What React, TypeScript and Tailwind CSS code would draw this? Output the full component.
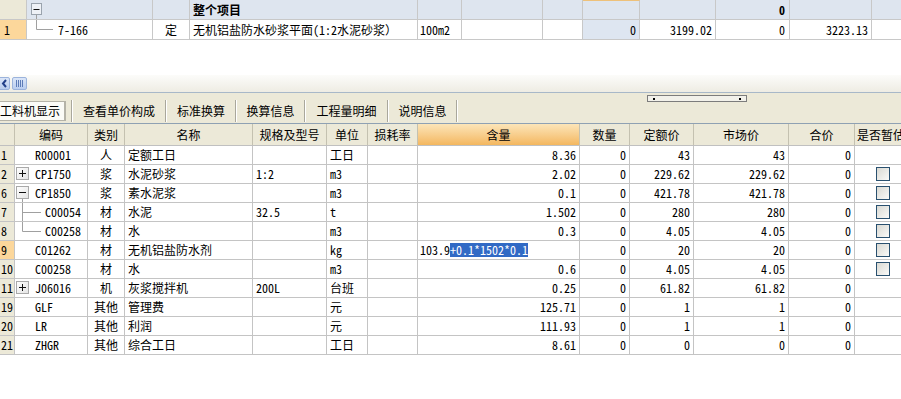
import React from 'react';

const F = "font-['Noto_Sans_Mono_CJK_SC','Noto_Sans_CJK_SC',monospace]";
const LINE = '#a0a0a0';

function Box({ minus, below }: { minus?: boolean; below?: boolean }) {
  return (
    <svg width="20" height="18" viewBox="0 0 20 18" className="shrink-0">
      {below && <line x1="7.5" y1="14" x2="7.5" y2="19" stroke={LINE} />}
      <defs>
        <linearGradient id="bx" x1="0" y1="0" x2="1" y2="1">
          <stop offset="0" stopColor="#ffffff" />
          <stop offset="1" stopColor="#e4e4e4" />
        </linearGradient>
      </defs>
      <rect x="1.5" y="2.5" width="12" height="12" fill="url(#bx)" stroke="#a9a9a9" />
      <line x1="4" y1="8.5" x2="11" y2="8.5" stroke="#111" />
      {!minus && <line x1="7.5" y1="5" x2="7.5" y2="12" stroke="#111" />}
    </svg>
  );
}

function Branch({ last }: { last?: boolean }) {
  return (
    <svg width="30" height="18" viewBox="0 0 30 18" className="shrink-0">
      <line x1="7.5" y1="-1" x2="7.5" y2={last ? 9.5 : 19} stroke={LINE} />
      <line x1="7.5" y1="9.5" x2="26" y2="9.5" stroke={LINE} />
    </svg>
  );
}

function CheckBox() {
  return (
    <div className="ml-[21px] w-[14px] h-[14px] border border-[#29506f] bg-gradient-to-br from-[#d9d9d3] to-[#fafaf8]" />
  );
}

type Row = {
  n: string;
  code: string;
  tree?: 'plus' | 'minus' | 'tee' | 'elbow';
  type: string;
  name: string;
  spec?: string;
  unit: string;
  qty: string;
  p1: string;
  p2: string;
  cb?: boolean;
  active?: boolean;
};

const rows: Row[] = [
  { n: '1', code: 'R00001', type: '人', name: '定额工日', unit: '工日', qty: '8.36', p1: '43', p2: '43' },
  { n: '2', code: 'CP1750', tree: 'plus', type: '浆', name: '水泥砂浆', spec: '1:2', unit: 'm3', qty: '2.02', p1: '229.62', p2: '229.62', cb: true },
  { n: '6', code: 'CP1850', tree: 'minus', type: '浆', name: '素水泥浆', unit: 'm3', qty: '0.1', p1: '421.78', p2: '421.78', cb: true },
  { n: '7', code: 'C00054', tree: 'tee', type: '材', name: '水泥', spec: '32.5', unit: 't', qty: '1.502', p1: '280', p2: '280', cb: true },
  { n: '8', code: 'C00258', tree: 'elbow', type: '材', name: '水', unit: 'm3', qty: '0.3', p1: '4.05', p2: '4.05', cb: true },
  { n: '9', code: 'C01262', type: '材', name: '无机铝盐防水剂', unit: 'kg', qty: '', p1: '20', p2: '20', cb: true, active: true },
  { n: '10', code: 'C00258', type: '材', name: '水', unit: 'm3', qty: '0.6', p1: '4.05', p2: '4.05', cb: true },
  { n: '11', code: 'J06016', tree: 'plus', type: '机', name: '灰浆搅拌机', spec: '200L', unit: '台班', qty: '0.25', p1: '61.82', p2: '61.82' },
  { n: '19', code: 'GLF', type: '其他', name: '管理费', unit: '元', qty: '125.71', p1: '1', p2: '1' },
  { n: '20', code: 'LR', type: '其他', name: '利润', unit: '元', qty: '111.93', p1: '1', p2: '1' },
  { n: '21', code: 'ZHGR', type: '其他', name: '综合工日', unit: '工日', qty: '8.61', p1: '0', p2: '0' },
];

const cell = 'shrink-0 h-full flex items-center border-r border-[#c4c4c4] overflow-hidden whitespace-nowrap';
const hcell = 'shrink-0 h-full flex items-center justify-center border-r border-[#c4c1b0] whitespace-nowrap';

function TopGrid() {
  const tc = 'shrink-0 h-full flex items-center border-r border-[#c8c8c8] overflow-hidden whitespace-nowrap';
  return (
    <div>
      <div className="flex h-[20px] border-b border-[#c8c8c8] bg-[#dee5ef]">
        <div className={`${tc} w-[27px] bg-[#ece9d8]`} />
        <div className={`${tc} w-[126px] items-start`}>
          <svg width="30" height="19" viewBox="0 0 30 19" className="shrink-0">
            <rect x="4.5" y="3.5" width="10" height="11" fill="#eef1f6" stroke="#9aa3ad" />
            <line x1="6.5" y1="9.5" x2="12.5" y2="9.5" stroke="#111" />
            <line x1="9.5" y1="14.5" x2="9.5" y2="20" stroke={LINE} />
          </svg>
        </div>
        <div className={`${tc} w-[37px]`} />
        <div className={`${tc} w-[228px] pl-[3px] font-bold`}>整个项目</div>
        <div className={`${tc} w-[44px]`} />
        <div className={`${tc} w-[81px]`} />
        <div className={`${tc} w-[40px]`} />
        <div className={`${tc} w-[57px] border-t border-t-[#eec17a]`} />
        <div className={`${tc} w-[76px]`} />
        <div className={`${tc} w-[74px] justify-end pr-[4px] font-bold`}>0</div>
        <div className={`${tc} w-[82px]`} />
        <div className={`${tc} w-[40px]`} />
      </div>
      <div className="flex h-[20px] border-b border-[#c8c8c8] bg-white">
        <div className={`${tc} w-[27px] bg-[#fcd79b] pl-[4px]`}>1</div>
        <div className={`${tc} w-[126px]`}>
          <svg width="31" height="19" viewBox="0 0 31 19" className="shrink-0">
            <line x1="9.5" y1="-1" x2="9.5" y2="9.5" stroke={LINE} />
            <line x1="9.5" y1="9.5" x2="26" y2="9.5" stroke={LINE} />
          </svg>
          <span>7-166</span>
        </div>
        <div className={`${tc} w-[37px] justify-center`}>定</div>
        <div className={`${tc} w-[228px] pl-[3px]`}>无机铝盐防水砂浆平面(1:2水泥砂浆）</div>
        <div className={`${tc} w-[44px] pl-[2px]`}>100m2</div>
        <div className={`${tc} w-[81px]`} />
        <div className={`${tc} w-[40px]`} />
        <div className={`${tc} w-[57px] justify-end pr-[3px] bg-[#dee6f1]`}>0</div>
        <div className={`${tc} w-[76px] justify-end pr-[3px]`}>3199.02</div>
        <div className={`${tc} w-[74px] justify-end pr-[4px]`}>0</div>
        <div className={`${tc} w-[82px] justify-end pr-[3px]`}>3223.13</div>
        <div className={`${tc} w-[40px]`} />
      </div>
    </div>
  );
}

function Toolbar() {
  return (
    <div className="h-[17px] bg-gradient-to-b from-[#fcfcfa] to-[#eeece3] flex items-start pt-[2px] gap-[2px]">
      <div className="ml-[-2px] w-[12px] h-[13px] rounded-[2px] border border-[#9bb3dc] bg-gradient-to-b from-[#dbe6f8] to-[#b9cdef] flex items-center justify-center">
        <svg width="7" height="9" viewBox="0 0 7 9">
          <path d="M5 1 L2 4.5 L5 8" stroke="#22408a" strokeWidth="2" fill="none" />
        </svg>
      </div>
      <div className="w-[15px] h-[13px] rounded-[2px] border border-[#9bb3dc] bg-gradient-to-b from-[#dbe6f8] to-[#b9cdef] flex items-center justify-center">
        <svg width="9" height="7" viewBox="0 0 9 7">
          <line x1="1.5" y1="0" x2="1.5" y2="7" stroke="#5d7cb8" />
          <line x1="3.5" y1="0" x2="3.5" y2="7" stroke="#5d7cb8" />
          <line x1="5.5" y1="0" x2="5.5" y2="7" stroke="#5d7cb8" />
          <line x1="7.5" y1="0" x2="7.5" y2="7" stroke="#5d7cb8" />
        </svg>
      </div>
    </div>
  );
}

const tabs = [
  { t: '查看单价构成', w: 'w-[92px]' },
  { t: '标准换算', w: 'w-[68px]' },
  { t: '换算信息', w: 'w-[67px]' },
  { t: '工程量明细', w: 'w-[81px]' },
  { t: '说明信息', w: 'w-[67px]' },
];

function Sep() {
  return <div className="shrink-0 w-[2px] h-[22px] border-l border-[#a9a79c] border-r border-r-white" />;
}

function TabBar() {
  return (
    <div className="relative h-[31px] bg-[#ece9d8] border-t border-[#a8b8c8] flex items-end pb-[1px]">
      <div className="absolute left-[647px] top-[2px] w-[100px] h-[7px] border border-[#7c7c7c] bg-[#f2f1ea] flex items-center justify-between px-[5px]">
        <div className="w-[2px] h-[2px] bg-black" />
        <div className="w-[2px] h-[2px] bg-black" />
      </div>
      <div className="w-[71px] h-[22px] flex items-center">
        <div className="w-[66px] h-[20px] bg-[#fbfbf7] border-t border-b border-r-2 border-[#b5b3a8] flex items-center pl-[0px]">
          工料机显示
        </div>
      </div>
      <Sep />
      {tabs.map((tb) => (
        <React.Fragment key={tb.t}>
          <div className={`${tb.w} h-[22px] flex items-center justify-center`}>{tb.t}</div>
          <Sep />
        </React.Fragment>
      ))}
    </div>
  );
}

function Header() {
  return (
    <div className="flex h-[23px] border-t border-[#8fa1b3] border-b border-b-[#c0c0c0] bg-[#ece9d8]">
      <div className={`${hcell} w-[15px]`} />
      <div className={`${hcell} w-[73px]`}>编码</div>
      <div className={`${hcell} w-[37px]`}>类别</div>
      <div className={`${hcell} w-[128px]`}>名称</div>
      <div className={`${hcell} w-[74px]`}>规格及型号</div>
      <div className={`${hcell} w-[41px]`}>单位</div>
      <div className={`${hcell} w-[50px]`}>损耗率</div>
      <div className={`${hcell} w-[162px] bg-gradient-to-b from-[#fce5b8] to-[#f3b75e]`}>含量</div>
      <div className={`${hcell} w-[50px]`}>数量</div>
      <div className={`${hcell} w-[64px]`}>定额价</div>
      <div className={`${hcell} w-[95px]`}>市场价</div>
      <div className={`${hcell} w-[66px]`}>合价</div>
      <div className={`${hcell} w-[80px] justify-start pl-[2px]`}>是否暂估</div>
    </div>
  );
}

function CodeCell({ r }: { r: Row }) {
  let lead: React.ReactNode = <div className="w-[20px] shrink-0" />;
  if (r.tree === 'plus') lead = <Box />;
  if (r.tree === 'minus') lead = <Box minus below />;
  if (r.tree === 'tee') lead = <Branch />;
  if (r.tree === 'elbow') lead = <Branch last />;
  return (
    <div className={`${cell} w-[73px]`}>
      {lead}
      <span>{r.code}</span>
    </div>
  );
}

function Body() {
  return (
    <div>
      {rows.map((r) => (
        <div key={r.n} className="flex h-[19px] border-b border-[#c4c4c4] bg-white">
          <div className={`${cell} w-[15px] pl-[1px] ${r.active ? 'bg-[#fcd79b]' : 'bg-[#ece9d8]'}`}>{r.n}</div>
          <CodeCell r={r} />
          <div className={`${cell} w-[37px] justify-center`}>{r.type}</div>
          <div className={`${cell} w-[128px] pl-[3px]`}>{r.name}</div>
          <div className={`${cell} w-[74px] pl-[3px]`}>{r.spec ?? ''}</div>
          <div className={`${cell} w-[41px] pl-[3px]`}>{r.unit}</div>
          <div className={`${cell} w-[50px]`} />
          {r.active ? (
            <div className={`${cell} w-[162px] pl-[2px]`}>
              <span>103.9</span>
              <span className="bg-[#316ac5] text-white leading-[14px]">+0.1*1502*0.1</span>
            </div>
          ) : (
            <div className={`${cell} w-[162px] justify-end pr-[3px]`}>{r.qty}</div>
          )}
          <div className={`${cell} w-[50px] justify-end pr-[3px]`}>0</div>
          <div className={`${cell} w-[64px] justify-end pr-[3px]`}>{r.p1}</div>
          <div className={`${cell} w-[95px] justify-end pr-[3px]`}>{r.p2}</div>
          <div className={`${cell} w-[66px] justify-end pr-[3px]`}>0</div>
          <div className="shrink-0 w-[80px] h-full flex items-center">{r.cb && <CheckBox />}</div>
        </div>
      ))}
    </div>
  );
}

export default function App() {
  return (
    <div className={`${F} text-[12px] leading-none text-black w-[901px] h-[399px] overflow-hidden bg-white`}>
      <div className="w-[940px]">
        <TopGrid />
        <div className="h-[35px] bg-white" />
        <Toolbar />
        <TabBar />
        <Header />
        <Body />
      </div>
    </div>
  );
}
